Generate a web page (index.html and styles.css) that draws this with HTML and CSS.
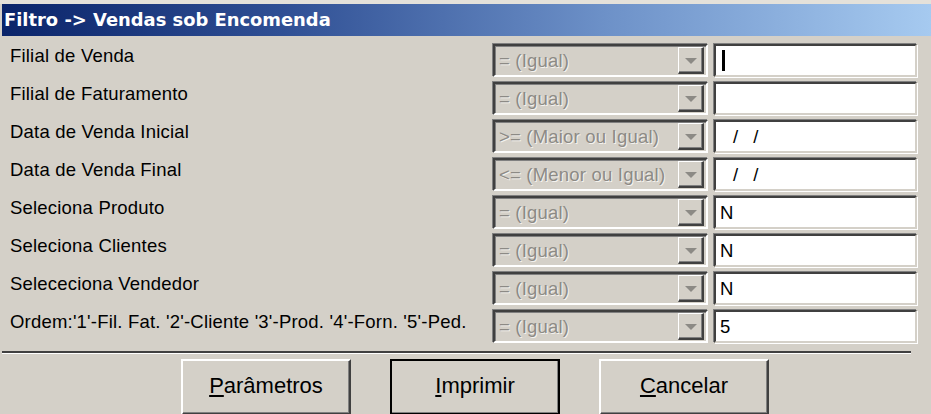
FILE: index.html
```html
<!DOCTYPE html>
<html>
<head>
<meta charset="utf-8">
<link rel="stylesheet" href="styles.css">
</head>
<body>
<div class="topstrip"></div>
<div class="titlebar">Filtro -&gt; Vendas sob Encomenda</div>
<div class="form">
  <div class="label">Filial de Venda</div>
  <div class="combo"><span class="ctext">= (Igual)</span><span class="cbtn"><span class="arrow"></span></span></div>
  <div class="edit"><span class="caret"></span></div>

  <div class="label">Filial de Faturamento</div>
  <div class="combo"><span class="ctext">= (Igual)</span><span class="cbtn"><span class="arrow"></span></span></div>
  <div class="edit"></div>

  <div class="label">Data de Venda Inicial</div>
  <div class="combo"><span class="ctext">&gt;= (Maior ou Igual)</span><span class="cbtn"><span class="arrow"></span></span></div>
  <div class="edit"><span class="val date">/ /</span></div>

  <div class="label">Data de Venda Final</div>
  <div class="combo"><span class="ctext">&lt;= (Menor ou Igual)</span><span class="cbtn"><span class="arrow"></span></span></div>
  <div class="edit"><span class="val date">/ /</span></div>

  <div class="label">Seleciona Produto</div>
  <div class="combo"><span class="ctext">= (Igual)</span><span class="cbtn"><span class="arrow"></span></span></div>
  <div class="edit"><span class="val">N</span></div>

  <div class="label">Seleciona Clientes</div>
  <div class="combo"><span class="ctext">= (Igual)</span><span class="cbtn"><span class="arrow"></span></span></div>
  <div class="edit"><span class="val">N</span></div>

  <div class="label">Selececiona Vendedor</div>
  <div class="combo"><span class="ctext">= (Igual)</span><span class="cbtn"><span class="arrow"></span></span></div>
  <div class="edit"><span class="val">N</span></div>

  <div class="label">Ordem:'1'-Fil. Fat. '2'-Cliente '3'-Prod. '4'-Forn. '5'-Ped.</div>
  <div class="combo"><span class="ctext">= (Igual)</span><span class="cbtn"><span class="arrow"></span></span></div>
  <div class="edit"><span class="val">5</span></div>
</div>
<div class="separator"></div>
<div class="buttons">
  <div class="btn"><span class="u">P</span>arâmetros</div>
  <div class="btn default"><span class="u">I</span>mprimir</div>
  <div class="btn"><span class="u">C</span>ancelar</div>
</div>
</body>
</html>
```

FILE: styles.css
```css
html, body {
  margin: 0;
  padding: 0;
  background: #d4d0c8;
  font-family: "Liberation Sans", Arial, sans-serif;
  overflow: hidden;
  width: 931px;
  height: 414px;
}
.topstrip {
  height: 4px;
  background: #e4e1da;
}
.titlebar {
  height: 32px;
  margin-left: 2px;
  background: linear-gradient(to right, #0a246a 0%, #2f4f94 30%, #6d91c8 65%, #a6caf0 100%);
  color: #fff;
  font-family: "DejaVu Sans", Verdana, sans-serif;
  font-weight: bold;
  font-size: 17.9px;
  line-height: 32px;
  padding-left: 2px;
  white-space: nowrap;
}
.form {
  display: grid;
  grid-template-columns: 477px 215px 203px;
  column-gap: 6px;
  row-gap: 5px;
  padding: 8px 0 0 10px;
}
.label {
  font-size: 18.5px;
  letter-spacing: 0.2px;
  color: #000;
  height: 33px;
  line-height: 23px;
  white-space: nowrap;
}
.combo {
  height: 33px;
  box-sizing: border-box;
  border-top: 2px solid #404040;
  border-left: 2px solid #404040;
  border-bottom: 2px solid #ffffff;
  border-right: 2px solid #ffffff;
  box-shadow: inset 1px 1px 0 #808080, -1px -1px 0 #808080;
  background: #d4d0c8;
  display: flex;
  align-items: center;
  justify-content: space-between;
  padding: 1px 2px 1px 4px;
}
.ctext {
  color: #8c8a85;
  font-size: 18.5px;
  letter-spacing: 0.2px;
  text-shadow: 1px 1px 0 #f4f2ee;
  white-space: nowrap;
}
.cbtn {
  width: 26px;
  height: 27px;
  box-sizing: border-box;
  background: #d4d0c8;
  border-top: 1px solid #ffffff;
  border-left: 1px solid #ffffff;
  border-right: 2px solid #404040;
  border-bottom: 2px solid #404040;
  box-shadow: inset -1px -1px 0 #808080;
  display: flex;
  align-items: center;
  justify-content: center;
  flex-shrink: 0;
}
.arrow {
  width: 0;
  height: 0;
  border-left: 6px solid transparent;
  border-right: 6px solid transparent;
  border-top: 6px solid #8c8a85;
  margin-top: 1px;
}
.edit {
  height: 33px;
  box-sizing: border-box;
  background: #fff;
  border-top: 2px solid #404040;
  border-left: 2px solid #404040;
  border-bottom: 2px solid #d4d0c8;
  border-right: 2px solid #d4d0c8;
  box-shadow: -1px -1px 0 #808080, 1px 1px 0 #ffffff;
  display: flex;
  align-items: center;
  padding-left: 4px;
  font-size: 18.5px;
  color: #000;
}
.val.date {
  padding-left: 13px;
  letter-spacing: 5px;
}
.caret {
  width: 3px;
  height: 21px;
  background: #000;
  margin-left: 2px;
}
.separator {
  margin: 8px 0 0 2px;
  width: 909px;
  height: 2px;
  background: #404040;
  border-bottom: 1px solid #ffffff;
}
.buttons {
  display: flex;
  gap: 39px;
  padding: 5px 0 0 181px;
}
.btn {
  width: 170px;
  height: 56px;
  box-sizing: border-box;
  border-top: 2px solid #ffffff;
  border-left: 2px solid #ffffff;
  border-right: 2px solid #404040;
  border-bottom: 2px solid #404040;
  box-shadow: inset -1px -1px 0 #808080;
  font-size: 22px;
  line-height: 25px;
  text-align: center;
  padding-top: 12px;
  color: #000;
}
.btn.default {
  outline: 2px solid #000;
  outline-offset: -2px;
}
.u {
  text-decoration: underline;
  text-underline-offset: 2px;
}
```
